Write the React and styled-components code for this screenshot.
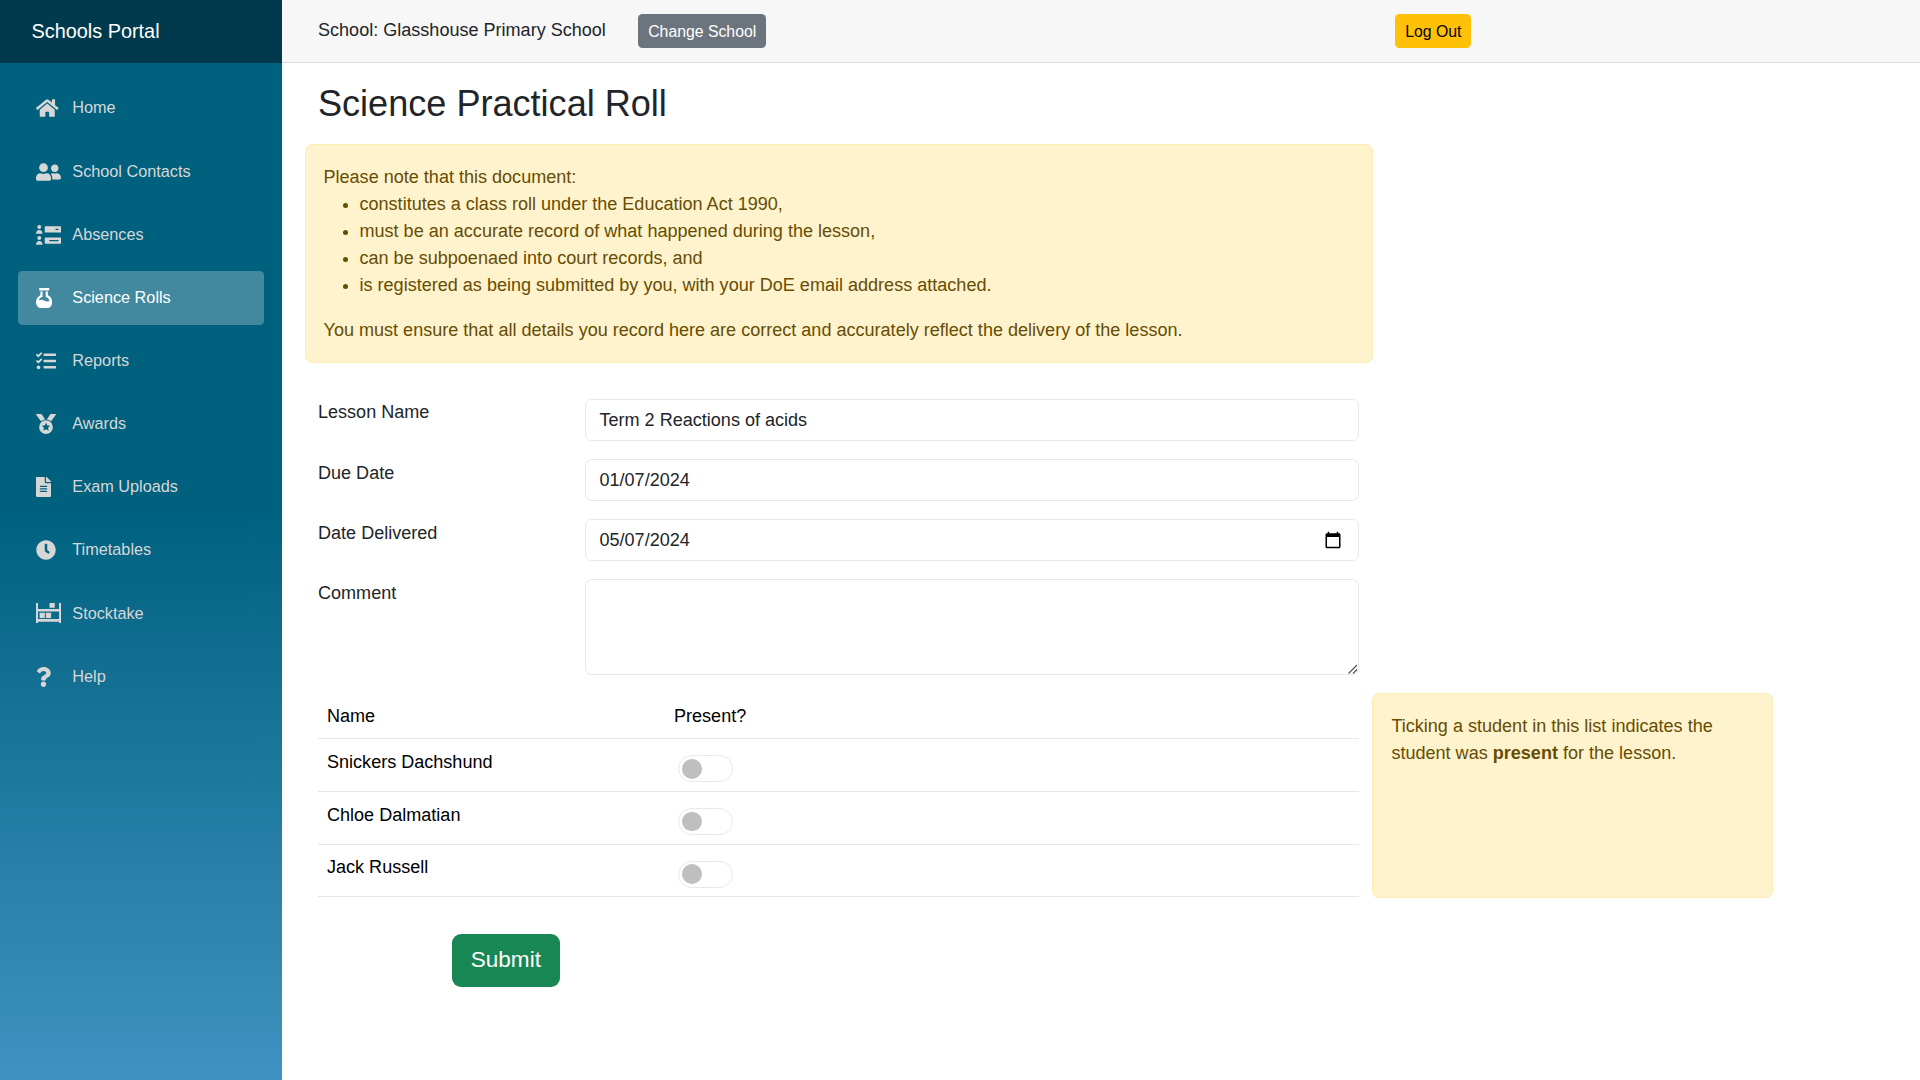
import React from "react";
import styled, { createGlobalStyle, css } from "styled-components";
import { FaHome, FaUserFriends, FaTasks, FaFileAlt, FaClock, FaQuestion } from "react-icons/fa";

const Global = createGlobalStyle`
  *, *::before, *::after { box-sizing: border-box; }
  html { font-size: 18.06px; }
  body {
    margin: 0;
    font-family: "Liberation Sans", Arial, sans-serif;
    font-size: 1rem;
    line-height: 1.5;
    color: #212529;
    background: #fff;
  }
  button, input, textarea { font-family: inherit; }
`;

const Page = styled.div`
  display: flex;
  height: 1080px;
  overflow: hidden;
`;

const Sidebar = styled.aside`
  flex: none;
  width: 282px;
  background: linear-gradient(180deg, rgb(0, 97, 127) 0%, rgb(0, 97, 127) 47%, rgb(64, 146, 192) 100%);
`;

const Brand = styled.div`
  height: 63px;
  padding: 17px 0 0 31.6px;
  background: rgba(0, 0, 0, 0.4);
  color: #fff;
  font-size: 19.85px;
  line-height: 28px;
`;

const Nav = styled.nav`
  display: flex;
  flex-direction: column;
  gap: 9px;
  padding: 18.3px 18px 0;
`;

const NavLink = styled.a`
  display: flex;
  align-items: center;
  height: 54.15px;
  padding: 0 0 1.4px 18px;
  border-radius: 4.5px;
  font-size: 16.25px;
  color: ${(p) => (p.$active ? "#fff" : "#d7d7d7")};
  background: ${(p) => (p.$active ? "rgba(255, 255, 255, 0.26)" : "transparent")};
`;

const IconSlot = styled.span`
  display: flex;
  align-items: center;
  flex: none;
  width: 36.3px;
  padding-top: 1.4px;
  svg {
    display: block;
    height: 20px;
    width: ${(p) => p.$width}px;
  }
`;

const Main = styled.main`
  flex: 1;
`;

const TopBar = styled.header`
  display: flex;
  height: 63px;
  padding: 14px 0 0 36px;
  background: #f7f7f7;
  border-bottom: 1px solid #dcdde0;
`;

const SchoolName = styled.span`
  width: 320.4px;
  line-height: 27px;
  padding-top: 3px;
`;

const SmallButton = styled.button`
  height: 34px;
  padding: 1px 9.8px 0;
  border: 0;
  border-radius: 4.5px;
  font-size: 15.8px;
  line-height: 33px;
  white-space: nowrap;
  color: ${(p) => p.$color};
  background: ${(p) => p.$bg};
`;

const LogOut = styled.div`
  margin-left: 629.4px;
`;

const Content = styled.div`
  padding: 18px 0 0 36px;
`;

const Title = styled.h1`
  height: 45px;
  margin: 0 0 18px;
  font-weight: 400;
  font-size: 36.1px;
  line-height: 46px;
`;

const noticeBox = css`
  padding: 18.8px 18px;
  border: 1px solid #ffecb5;
  border-radius: 6.8px;
  background: #fff3cd;
  color: #664d03;
`;

const Notice = styled.section`
  ${noticeBox}
  width: 1068.5px;
  height: 218.7px;
  margin-left: -13.5px;
  p { margin: 0; }
  ul { margin: 0 0 18px; padding-left: 36px; }
`;

const Form = styled.div`
  display: grid;
  grid-template-columns: 267px 774px;
  row-gap: 18px;
  margin-top: 36px;
`;

const Label = styled.label`
  padding-top: 0.8px;
`;

const field = css`
  width: 100%;
  padding: 0 13.5px;
  border: 1px solid #e6e8eb;
  border-radius: 6.8px;
  background: #fff;
  color: #212529;
  font-size: 1rem;
`;

const Field = styled.div`
  ${field}
  display: flex;
  align-items: center;
  justify-content: space-between;
  height: 42.15px;
  padding-top: 1px;
  svg { margin: -1px 2.2px 0 0; }
`;

const CommentBox = styled.div`
  position: relative;
  height: 96px;
`;

const Comment = styled.textarea`
  ${field}
  display: block;
  height: 100%;
  resize: none;
`;

const Grip = styled.svg`
  position: absolute;
  right: 1.5px;
  bottom: 1.5px;
`;

const RollArea = styled.div`
  display: flex;
  gap: 13.4px;
  margin-top: 18.3px;
`;

const Roll = styled.div`
  width: 1041px;
`;

const RollRow = styled.div`
  display: grid;
  grid-template-columns: 347px 1fr;
  height: ${(p) => (p.$head ? "46px" : "52.7px")};
  padding: 9.7px 9px 0;
  border-bottom: 1px solid #e4e6e9;
  color: #000;
`;

const Switch = styled.span`
  display: flex;
  align-items: center;
  width: 54.5px;
  height: 27.1px;
  margin: 6.1px 0 0 4.3px;
  padding-left: 2.8px;
  border: 1px solid #e6e8eb;
  border-radius: 14px;
  &::before {
    content: "";
    width: 19.7px;
    height: 19.7px;
    border-radius: 50%;
    background: #bfbfbf;
  }
`;

const Hint = styled.aside`
  ${noticeBox}
  width: 401px;
  height: 204.3px;
`;

const Submit = styled.button`
  display: block;
  width: 107.7px;
  height: 53.7px;
  margin: 35.8px 0 0 134px;
  padding: 0;
  border: 0;
  border-radius: 9px;
  background: #198754;
  color: #fff;
  font-size: 22.56px;
`;

const RosterIcon = () => (
  <svg viewBox="0 0 640 512" fill="currentColor">
    <circle cx="84" cy="52" r="50" />
    <path d="M0 224c0-58 34-98 84-98s84 40 84 98z" />
    <circle cx="84" cy="334" r="50" />
    <path d="M0 508c0-58 34-98 84-98s84 40 84 98z" />
    <path fillRule="evenodd" d="M240 30h384q16 0 16 16v132q0 16-16 16H240q-16 0-16-16V46q0-16 16-16zM500 96v32h76V96z" />
    <path fillRule="evenodd" d="M240 318h384q16 0 16 16v132q0 16-16 16H240q-16 0-16-16V334q0-16 16-16zM340 384v32h236v-32z" />
  </svg>
);

const FlaskIcon = () => (
  <svg viewBox="0 0 416 512" fill="currentColor">
    <path d="M96 0h228q14 0 14 14v36q0 14-14 14H96q-14 0-14-14V14Q82 0 96 0z" />
    <path fillRule="evenodd" d="M112 92h192v96c66 32 112 98 112 174 0 58-28 106-68 138-10 8-20 12-34 12H102c-14 0-24-4-34-12C28 468 0 420 0 362c0-76 46-142 112-174zM168 92v132c-46 16-82 46-96 90 54-20 96-18 136 6 48 28 92 32 136 10-12-52-44-88-96-106V92z" />
  </svg>
);

const MedalIcon = () => (
  <svg viewBox="0 0 512 512" fill="currentColor">
    <path d="M16 0h112c14 0 22 6 28 16l78 122c-42 6-80 24-108 50L4 22C-4 12 2 0 16 0z" />
    <path d="M496 0H384c-14 0-22 6-28 16l-78 122c42 6 80 24 108 50L508 22c8-10 2-22-12-22z" />
    <path fillRule="evenodd" d="M256 160a176 176 0 1 0 0 352 176 176 0 0 0 0-352zM256 224l32 69 76 9-56 52 15 75-67-37-67 37 15-75-56-52 76-9z" />
  </svg>
);

const ShelfIcon = () => (
  <svg viewBox="0 0 640 512" fill="currentColor">
    <path fillRule="evenodd" d="M0 0h50v156h540V0h50v512h-50v-32H50v32H0zM50 220v190h540V220z" />
    <rect x="345" width="136" height="124" rx="8" />
    <rect x="92" y="252" width="134" height="130" rx="8" />
    <rect x="252" y="252" width="134" height="130" rx="8" />
  </svg>
);

const CalendarIcon = () => (
  <svg width="18" height="18" viewBox="0 0 24 24" fill="#000">
    <path d="M20 3h-1V1h-2v2H7V1H5v2H4c-1.100 0-2 .9-2 2v16c0 1.100.9 2 2 2h16c1.100 0 2-.9 2-2V5c0-1.100-.9-2-2-2zm0 18H4V8h16v13z" />
  </svg>
);

const links = [
  ["Home", FaHome, 22.5],
  ["School Contacts", FaUserFriends, 25],
  ["Absences", RosterIcon, 25],
  ["Science Rolls", FlaskIcon, 16.25],
  ["Reports", FaTasks, 20],
  ["Awards", MedalIcon, 20],
  ["Exam Uploads", FaFileAlt, 15],
  ["Timetables", FaClock, 20],
  ["Stocktake", ShelfIcon, 25],
  ["Help", FaQuestion, 15],
];

const students = ["Snickers Dachshund", "Chloe Dalmatian", "Jack Russell"];

export default function App() {
  return (
    <Page>
      <Global />
      <Sidebar>
        <Brand>Schools Portal</Brand>
        <Nav>
          {links.map(([label, Icon, width]) => (
            <NavLink key={label} $active={label === "Science Rolls"}>
              <IconSlot $width={width}><Icon /></IconSlot>
              {label}
            </NavLink>
          ))}
        </Nav>
      </Sidebar>
      <Main>
        <TopBar>
          <SchoolName>School: Glasshouse Primary School</SchoolName>
          <SmallButton $bg="#6c757d" $color="#fff">Change School</SmallButton>
          <LogOut>
            <SmallButton $bg="#ffc107" $color="#000">Log Out</SmallButton>
          </LogOut>
        </TopBar>
        <Content>
          <Title>Science Practical Roll</Title>
          <Notice>
            <p>Please note that this document:</p>
            <ul>
              <li>constitutes a class roll under the Education Act 1990,</li>
              <li>must be an accurate record of what happened during the lesson,</li>
              <li>can be subpoenaed into court records, and</li>
              <li>is registered as being submitted by you, with your DoE email address attached.</li>
            </ul>
            <p>You must ensure that all details you record here are correct and accurately reflect the delivery of the lesson.</p>
          </Notice>
          <Form>
            <Label>Lesson Name</Label>
            <Field>Term 2 Reactions of acids</Field>
            <Label>Due Date</Label>
            <Field>01/07/2024</Field>
            <Label>Date Delivered</Label>
            <Field>05/07/2024<CalendarIcon /></Field>
            <Label>Comment</Label>
            <CommentBox>
              <Comment />
              <Grip width="10" height="10" viewBox="0 0 10 10" stroke="#555" strokeWidth="1.2" fill="none">
                <path d="M0.500 9.500L9 1M5 9.500L9 5.500" />
              </Grip>
            </CommentBox>
          </Form>
          <RollArea>
            <Roll>
              <RollRow $head><span>Name</span><span>Present?</span></RollRow>
              {students.map((name) => (
                <RollRow key={name}><span>{name}</span><Switch /></RollRow>
              ))}
            </Roll>
            <Hint>
              Ticking a student in this list indicates the student was <b>present</b> for the lesson.
            </Hint>
          </RollArea>
          <Submit>Submit</Submit>
        </Content>
      </Main>
    </Page>
  );
}
